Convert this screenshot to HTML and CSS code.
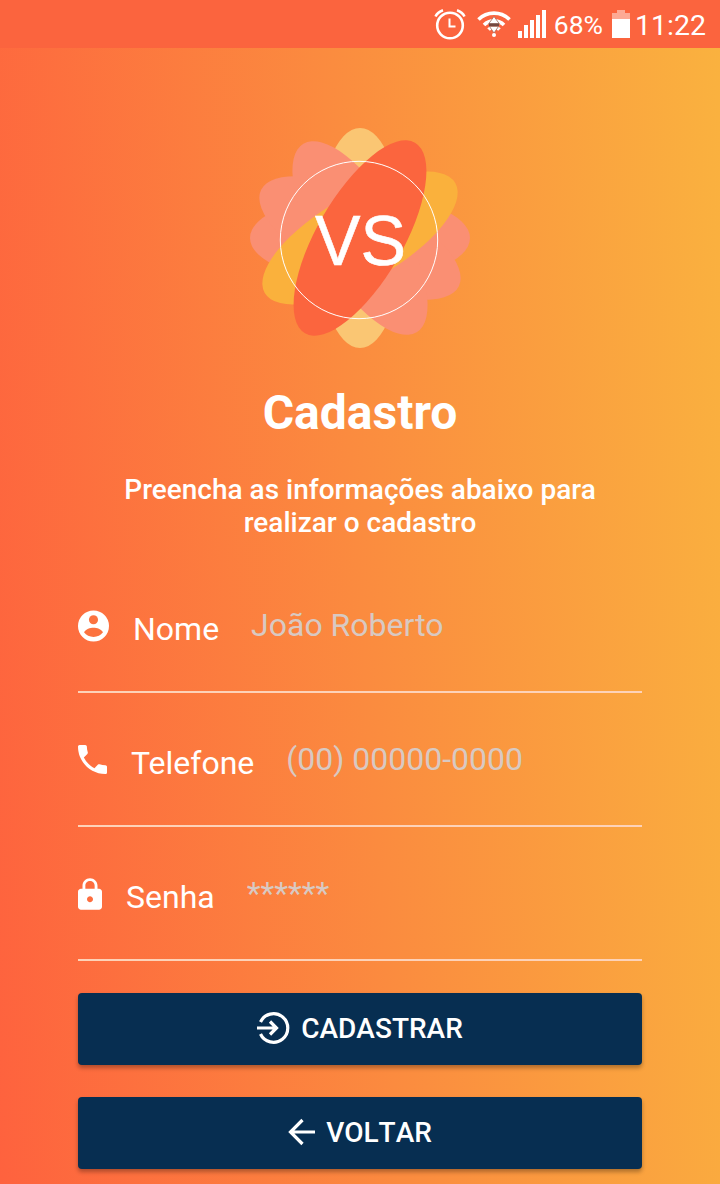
FILE: index.html
```html
<!DOCTYPE html>
<html lang="pt-BR">
<head>
    <meta charset="UTF-8">
    <meta name="viewport" content="width=device-width, initial-scale=1.0">
    <title>Cadastro</title>
    <link rel="stylesheet" href="styles.css">
</head>
<body>
    <div class="status-bar">
        <svg class="icon-alarm" width="34" height="32" viewBox="0 0 34 32" fill="none" stroke="#fff">
            <circle cx="17" cy="16.500" r="12.800" stroke-width="2.600"/>
            <path d="M16.500 9.500v8h6" stroke-width="2"/>
            <path d="M2.500 7.500C4 4.500 6.500 2.500 10 1.300M31.500 7.500C30 4.500 27.500 2.500 24 1.300" stroke-width="2.600"/>
        </svg>
        <svg class="icon-wifi" width="34" height="28" viewBox="0 0 34 28">
            <g fill="none" stroke="#fff" stroke-width="3.600">
                <path d="M1.500 8.500C10 0 24 0 32.500 8.500"/>
                <path d="M7 14c5.500-5.500 14.500-5.500 20 0"/>
                <path d="M11.500 18.500c3-3 8-3 11 0"/>
            </g>
            <path d="M17 5.500l5.500 7.500h-11z" fill="#fff" stroke="#a66a5c" stroke-width=".8"/>
            <path d="M12 12.300h10v3H12z" fill="#74483f"/>
            <path d="M17 22l-4.500-6.500h9z" fill="#fff" stroke="#a66a5c" stroke-width=".8"/>
            <circle cx="17" cy="24" r="2" fill="#fff"/>
        </svg>
        <svg class="icon-signal" width="28" height="28" viewBox="0 0 28 28" fill="#fff">
            <path d="M0 21h4v7H0zM6 15h4v13H6zM12 10h4v18h-4zM18 5h4v23h-4zM24 0h4v28h-4z"/>
        </svg>
        <span class="battery-level">68%</span>
        <svg class="icon-battery" width="18" height="28" viewBox="0 0 18 28" fill="#fff">
            <path d="M5 0h8v3h5v6H0V3h5z" opacity=".45"/>
            <path d="M0 9h18v19H0z"/>
        </svg>
        <span class="clock">11:22</span>
    </div>

    <div class="container">
        <svg class="logo" width="220" height="220" viewBox="-110 -110 220 220">
            <ellipse rx="43" ry="110" fill="#fac673"/>
            <g fill="#fa8f73">
                <ellipse rx="43" ry="110" transform="rotate(90)"/>
                <ellipse rx="43" ry="110" transform="rotate(-64)"/>
                <ellipse rx="43" ry="110" transform="rotate(-31)"/>
            </g>
            <ellipse rx="43" ry="110" transform="rotate(60)" fill="#fab13c"/>
            <ellipse rx="43" ry="110" transform="rotate(30)" fill="#fb653e"/>
            <circle cx="-1" cy="2" r="78.700" fill="none" stroke="#fff" stroke-width="1"/>
            <text x="-45" y="27" textLength="91" lengthAdjust="spacingAndGlyphs" class="logo-text">VS</text>
        </svg>

        <h1>Cadastro</h1>
        <p class="subtitle">Preencha as informações abaixo para realizar o cadastro</p>

        <form>
            <div class="form-group">
                <svg width="31" height="33" viewBox="0 -1 32 33">
                    <circle cx="16" cy="16" r="16" fill="#fff"/>
                    <circle cx="16" cy="9.500" r="4.700" fill="#fc723f"/>
                    <path d="M6.200 22.500C8 19 12.500 17.700 16 17.700s8 1.300 9.800 4.800C23.500 25.700 20 27.300 16 27.300s-7.500-1.600-9.800-4.800z" fill="#fc723f"/>
                </svg>
                <label for="nome">Nome</label>
                <input type="text" id="nome" placeholder="João Roberto">
            </div>
            <div class="form-group">
                <svg class="icon-phone" width="29" height="29" viewBox="3 3 18 18" fill="#fff">
                    <path d="M6.620 10.790c1.440 2.830 3.760 5.140 6.590 6.590l2.200-2.200c.27-.27.67-.36 1.020-.24 1.120.37 2.330.57 3.570.57.55 0 1 .45 1 1V20c0 .55-.45 1-1 1C10.610 21 3 13.390 3 4c0-.55.45-1 1-1h3.500c.55 0 1 .45 1 1 0 1.250.2 2.450.57 3.570.11.35.03.74-.25 1.020z"/>
                </svg>
                <label for="telefone">Telefone</label>
                <input type="text" id="telefone" placeholder="(00) 00000-0000">
            </div>
            <div class="form-group">
                <svg class="icon-lock" width="24" height="32" viewBox="4 1 16 21" fill="#fff">
                    <path d="M18 8h-1V6c0-2.760-2.240-5-5-5S7 3.240 7 6v2H6c-1.100 0-2 .9-2 2v10c0 1.100.9 2 2 2h12c1.100 0 2-.9 2-2V10c0-1.100-.9-2-2-2zm-6 9c-1.100 0-2-.9-2-2s.9-2 2-2 2 .9 2 2-.9 2-2 2zm3.100-9H8.900V6c0-1.710 1.390-3.100 3.100-3.100s3.100 1.390 3.100 3.100z"/>
                </svg>
                <label for="senha">Senha</label>
                <input type="text" id="senha" placeholder="******">
            </div>

            <button type="button">
                <svg width="34" height="34" viewBox="-1 0 34 34" fill="none" stroke="#fff" stroke-width="3.200">
                    <path d="M3.500 11A14.300 14.300 0 1 1 3.500 23M0 17h19.500M13 10.500l6.500 6.500-6.500 6.500"/>
                </svg>
                <span>CADASTRAR</span>
            </button>
            <button type="button">
                <svg width="28" height="28" viewBox="0 0 28 28" fill="none" stroke="#fff" stroke-width="3.200">
                    <path d="M28 14H3M15.500 2L3.500 14l12 12"/>
                </svg>
                <span>VOLTAR</span>
            </button>
        </form>
    </div>
</body>
</html>
```

FILE: styles.css
```css
* {
    box-sizing: border-box;
}
body {
    margin: 0;
    height: 1184px;
    overflow: hidden;
    font-family: Roboto, sans-serif;
    color: #fff;
    background: linear-gradient(86deg, #fe623e, #fb8b3f 50%, #fab23f);
}
.status-bar {
    height: 48px;
    padding: 2px 14px 0 0;
    display: flex;
    align-items: center;
    justify-content: flex-end;
    background: #fb643e;
}
.icon-alarm {
    margin-right: 10px;
}
.icon-wifi {
    margin-right: 7px;
}
.icon-signal {
    margin-right: 8px;
    margin-top: -2px;
}
.battery-level {
    font-size: 26.5px;
    margin-top: -1px;
    margin-right: 9px;
}
.icon-battery {
    margin-top: -2px;
}
.clock {
    font-size: 28.5px;
    margin-left: 5px;
}
.container {
    padding: 80px 78px 0;
}
.logo {
    display: block;
    margin: 0 auto;
}
.logo-text {
    font-family: "Liberation Sans", Arial, sans-serif;
    font-size: 71px;
    fill: #fff;
    stroke: #fff;
    stroke-width: 0.6px;
}
h1 {
    margin: 37px 0 0;
    font-size: 48px;
    line-height: 56px;
    text-align: center;
}
.subtitle {
    margin: 32px 32px 0;
    font-size: 28px;
    font-weight: 500;
    line-height: 33px;
    text-align: center;
}
form {
    margin-top: 20px;
}
.form-group {
    height: 134px;
    padding-top: 50px;
    display: flex;
    align-items: flex-start;
    border-bottom: 2px solid #fdd2b8;
}
.icon-phone {
    margin-top: 2px;
}
.icon-lock {
    margin-top: 1px;
}
label {
    margin: 1px 32px 0 24px;
    font-size: 32px;
    line-height: 38px;
}
input {
    flex: 1;
    min-width: 0;
    height: 38px;
    padding: 0;
    margin-top: -3px;
    border: none;
    outline: none;
    background: none;
    color: #fff;
    font-family: inherit;
    font-size: 32px;
}
input::placeholder {
    color: #d8c9c2;
}
button {
    width: 100%;
    height: 72px;
    margin-top: 32px;
    padding: 0 1px 2px 0;
    display: flex;
    align-items: center;
    justify-content: center;
    gap: 11px;
    border: none;
    border-radius: 4px;
    background: #072e51;
    box-shadow: 0 3px 4px rgba(0,0,0,0.3);
    color: #fff;
    font-family: inherit;
    font-size: 28px;
    font-weight: 500;
    font-kerning: none;
}
```
